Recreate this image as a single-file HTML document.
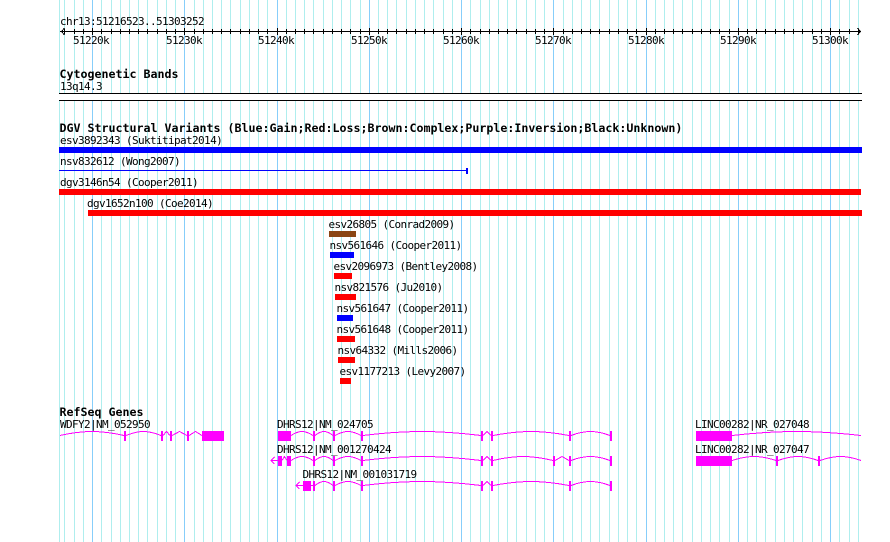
<!DOCTYPE html>
<html><head><meta charset="utf-8"><style>
html,body{margin:0;padding:0;background:#fff;width:890px;height:542px;overflow:hidden}
svg{display:block}
text{font-family:"DejaVu Sans Mono","Liberation Mono",monospace;font-size:11px;letter-spacing:-0.62px;fill:#000;white-space:pre}
text.b{font-size:11.63px;letter-spacing:0;font-weight:bold}
.g{fill:none;stroke:#f0f;stroke-width:1}
</style></head><body>
<svg width="890" height="542" viewBox="0 0 890 542" xmlns="http://www.w3.org/2000/svg">
<g shape-rendering="crispEdges">
<path fill="none" stroke="#afeeee" d="M59.5 0V542M64.5 0V542M74.5 0V542M83.5 0V542M101.5 0V542M111.5 0V542M120.5 0V542M129.5 0V542M138.5 0V542M147.5 0V542M157.5 0V542M166.5 0V542M175.5 0V542M194.5 0V542M203.5 0V542M212.5 0V542M221.5 0V542M230.5 0V542M240.5 0V542M249.5 0V542M258.5 0V542M267.5 0V542M286.5 0V542M295.5 0V542M304.5 0V542M313.5 0V542M323.5 0V542M332.5 0V542M341.5 0V542M350.5 0V542M360.5 0V542M378.5 0V542M387.5 0V542M396.5 0V542M406.5 0V542M415.5 0V542M424.5 0V542M433.5 0V542M443.5 0V542M452.5 0V542M470.5 0V542M480.5 0V542M489.5 0V542M498.5 0V542M507.5 0V542M516.5 0V542M526.5 0V542M535.5 0V542M544.5 0V542M563.5 0V542M572.5 0V542M581.5 0V542M590.5 0V542M599.5 0V542M609.5 0V542M618.5 0V542M627.5 0V542M636.5 0V542M655.5 0V542M664.5 0V542M673.5 0V542M682.5 0V542M692.5 0V542M701.5 0V542M710.5 0V542M719.5 0V542M729.5 0V542M747.5 0V542M756.5 0V542M765.5 0V542M775.5 0V542M784.5 0V542M793.5 0V542M802.5 0V542M812.5 0V542M821.5 0V542M839.5 0V542M849.5 0V542M858.5 0V542"/>
<path fill="none" stroke="#87cefa" d="M92.5 0V542M184.5 0V542M277.5 0V542M369.5 0V542M461.5 0V542M553.5 0V542M646.5 0V542M738.5 0V542M830.5 0V542"/>

<!-- ruler -->
<path fill="none" stroke="#000" d="M60 31.5H860M64.5 29V34M74.5 29V34M83.5 29V34M92.5 28V35M101.5 29V34M111.5 29V34M120.5 29V34M129.5 29V34M138.5 29V34M147.5 29V34M157.5 29V34M166.5 29V34M175.5 29V34M184.5 28V35M194.5 29V34M203.5 29V34M212.5 29V34M221.5 29V34M230.5 29V34M240.5 29V34M249.5 29V34M258.5 29V34M267.5 29V34M277.5 28V35M286.5 29V34M295.5 29V34M304.5 29V34M313.5 29V34M323.5 29V34M332.5 29V34M341.5 29V34M350.5 29V34M360.5 29V34M369.5 28V35M378.5 29V34M387.5 29V34M396.5 29V34M406.5 29V34M415.5 29V34M424.5 29V34M433.5 29V34M443.5 29V34M452.5 29V34M461.5 28V35M470.5 29V34M480.5 29V34M489.5 29V34M498.5 29V34M507.5 29V34M516.5 29V34M526.5 29V34M535.5 29V34M544.5 29V34M553.5 28V35M563.5 29V34M572.5 29V34M581.5 29V34M590.5 29V34M599.5 29V34M609.5 29V34M618.5 29V34M627.5 29V34M636.5 29V34M646.5 28V35M655.5 29V34M664.5 29V34M673.5 29V34M682.5 29V34M692.5 29V34M701.5 29V34M710.5 29V34M719.5 29V34M729.5 29V34M738.5 28V35M747.5 29V34M756.5 29V34M765.5 29V34M775.5 29V34M784.5 29V34M793.5 29V34M802.5 29V34M812.5 29V34M821.5 29V34M830.5 28V35M839.5 29V34M849.5 29V34M858.5 29V34"/>
<path fill="none" stroke="#000" d="M64.5 28L61.5 31.5L64.5 35M857.5 28L860.5 31.5L857.5 35"/>

<!-- cyto band -->
<rect x="59" y="94" width="803" height="6" fill="#fff"/>
<rect x="59" y="93" width="803" height="1" fill="#000"/>
<rect x="59" y="100" width="803" height="1" fill="#000"/>

<!-- DGV bars -->
<rect x="59" y="147" width="803" height="6" fill="#00f"/>
<rect x="59" y="170" width="408" height="1" fill="#00f"/>
<rect x="466" y="168" width="2" height="6" fill="#00f"/>
<rect x="59" y="189" width="802" height="6" fill="#f00"/>
<rect x="88" y="210" width="774" height="6" fill="#f00"/>
<rect x="329" y="231" width="27" height="6" fill="#8b4513"/>
<rect x="330" y="252" width="24" height="6" fill="#00f"/>
<rect x="334" y="273" width="18" height="6" fill="#f00"/>
<rect x="335" y="294" width="21" height="6" fill="#f00"/>
<rect x="337" y="315" width="16" height="6" fill="#00f"/>
<rect x="337" y="336" width="18" height="6" fill="#f00"/>
<rect x="338" y="357" width="17" height="6" fill="#f00"/>
<rect x="340" y="378" width="11" height="6" fill="#f00"/>

<!-- genes: exons -->
<g fill="#f0f">
<rect x="124" y="431" width="2" height="10"/><rect x="161" y="431" width="2" height="10"/><rect x="170" y="431" width="2" height="10"/><rect x="187" y="431" width="2" height="10"/><rect x="202" y="431" width="22" height="10"/>
<rect x="278" y="431" width="13" height="10"/><rect x="313" y="431" width="2" height="10"/><rect x="333" y="431" width="2" height="10"/><rect x="361" y="431" width="2" height="10"/><rect x="481" y="431" width="2" height="10"/><rect x="491" y="431" width="2" height="10"/><rect x="569" y="431" width="2" height="10"/><rect x="610" y="431" width="2" height="10"/>
<rect x="278" y="456" width="4" height="10"/><rect x="287" y="456" width="4" height="10"/><rect x="313" y="456" width="2" height="10"/><rect x="333" y="456" width="2" height="10"/><rect x="361" y="456" width="2" height="10"/><rect x="481" y="456" width="2" height="10"/><rect x="491" y="456" width="2" height="10"/><rect x="553" y="456" width="2" height="10"/><rect x="569" y="456" width="2" height="10"/><rect x="610" y="456" width="2" height="10"/>
<rect x="303" y="481" width="8" height="10"/><rect x="313" y="481" width="2" height="10"/><rect x="333" y="481" width="2" height="10"/><rect x="361" y="481" width="2" height="10"/><rect x="481" y="481" width="2" height="10"/><rect x="491" y="481" width="2" height="10"/><rect x="569" y="481" width="2" height="10"/><rect x="610" y="481" width="2" height="10"/>
<rect x="696" y="431" width="36" height="10"/>
<rect x="696" y="456" width="36" height="10"/><rect x="776" y="456" width="2" height="10"/><rect x="818" y="456" width="2" height="10"/>
</g>
<!-- genes: introns -->
<path class="g" d="M60 435.5C83 430.2 101 430.2 124 435.5M126 435.5C139 430.2 148 430.2 161 435.5M163 435.5L166.5 431.5L170 435.5M172 435.5L179.5 431.5L187 435.5M189 435.5L195.5 431.5L202 435.5"/>
<path class="g" d="M291 435.5C299 430.2 305 430.2 313 435.5M315 435.5C321.5 430.2 326.5 430.2 333 435.5M335 435.5C344.5 430.2 351.5 430.2 361 435.5M363 435.5C406 430.2 438 430.2 481 435.5M483 435.5L487 431.5L491 435.5M493 435.5C520.7 430.2 541.3 430.2 569 435.5M571 435.5C585 430.2 596 430.2 610 435.5"/>
<path class="g" d="M271 460.5H278M274.5 457L271 460.5L274.5 464M282 460.5L284.5 456.5L287 460.5M291 460.5C299 455.2 305 455.2 313 460.5M315 460.5C321.5 455.2 326.5 455.2 333 460.5M335 460.5C344.5 455.2 351.5 455.2 361 460.5M363 460.5C406 455.2 438 455.2 481 460.5M483 460.5L487 456.5L491 460.5M493 460.5C515 455.2 531 455.2 553 460.5M555 460.5L562 456.5L569 460.5M571 460.5C585 455.2 596 455.2 610 460.5"/>
<path class="g" d="M296 485.5H303M299.5 482L296 485.5L299.5 489M311 485.5H313M315 485.5C321.5 480.2 326.5 480.2 333 485.5M335 485.5C344.5 480.2 351.5 480.2 361 485.5M363 485.5C406 480.2 438 480.2 481 485.5M483 485.5L487 481.5L491 485.5M493 485.5C520.7 480.2 541.3 480.2 569 485.5M571 485.5C585 480.2 596 480.2 610 485.5"/>
<path class="g" d="M732 435.5C779 430.2 814 430.2 861 435.5"/>
<path class="g" d="M732 460.5C748 455.2 760 455.2 776 460.5M778 460.5C792.5 455.2 803.5 455.2 818 460.5M820 460.5C835 455.2 846 455.2 861 460.5"/>
</g>

<text x="60" y="25">chr13:51216523..51303252</text>
<text x="73" y="44">51220k</text>
<text x="166" y="44">51230k</text>
<text x="258" y="44">51240k</text>
<text x="351" y="44">51250k</text>
<text x="443" y="44">51260k</text>
<text x="535" y="44">51270k</text>
<text x="628" y="44">51280k</text>
<text x="720" y="44">51290k</text>
<text x="812" y="44">51300k</text>

<text class="b" x="59.5" y="78">Cytogenetic Bands</text>
<text x="60" y="90">13q14.3</text>

<text class="b" x="59.5" y="132">DGV Structural Variants (Blue:Gain;Red:Loss;Brown:Complex;Purple:Inversion;Black:Unknown)</text>
<text x="60" y="144">esv3892343 (Suktitipat2014)</text>
<text x="60" y="165">nsv832612 (Wong2007)</text>
<text x="60" y="186">dgv3146n54 (Cooper2011)</text>
<text x="87" y="207">dgv1652n100 (Coe2014)</text>
<text x="328.5" y="228">esv26805 (Conrad2009)</text>
<text x="329.5" y="249">nsv561646 (Cooper2011)</text>
<text x="333.5" y="270">esv2096973 (Bentley2008)</text>
<text x="334.5" y="291">nsv821576 (Ju2010)</text>
<text x="336.5" y="312">nsv561647 (Cooper2011)</text>
<text x="336.5" y="333">nsv561648 (Cooper2011)</text>
<text x="337.5" y="354">nsv64332 (Mills2006)</text>
<text x="339.5" y="375">esv1177213 (Levy2007)</text>

<text class="b" x="59.5" y="416">RefSeq Genes</text>
<text x="60" y="428">WDFY2|NM_052950</text>
<text x="277" y="428">DHRS12|NM_024705</text>
<text x="277" y="453">DHRS12|NM_001270424</text>
<text x="302.5" y="478">DHRS12|NM_001031719</text>
<text x="695" y="428">LINC00282|NR_027048</text>
<text x="695" y="453">LINC00282|NR_027047</text>
</svg>
</body></html>
